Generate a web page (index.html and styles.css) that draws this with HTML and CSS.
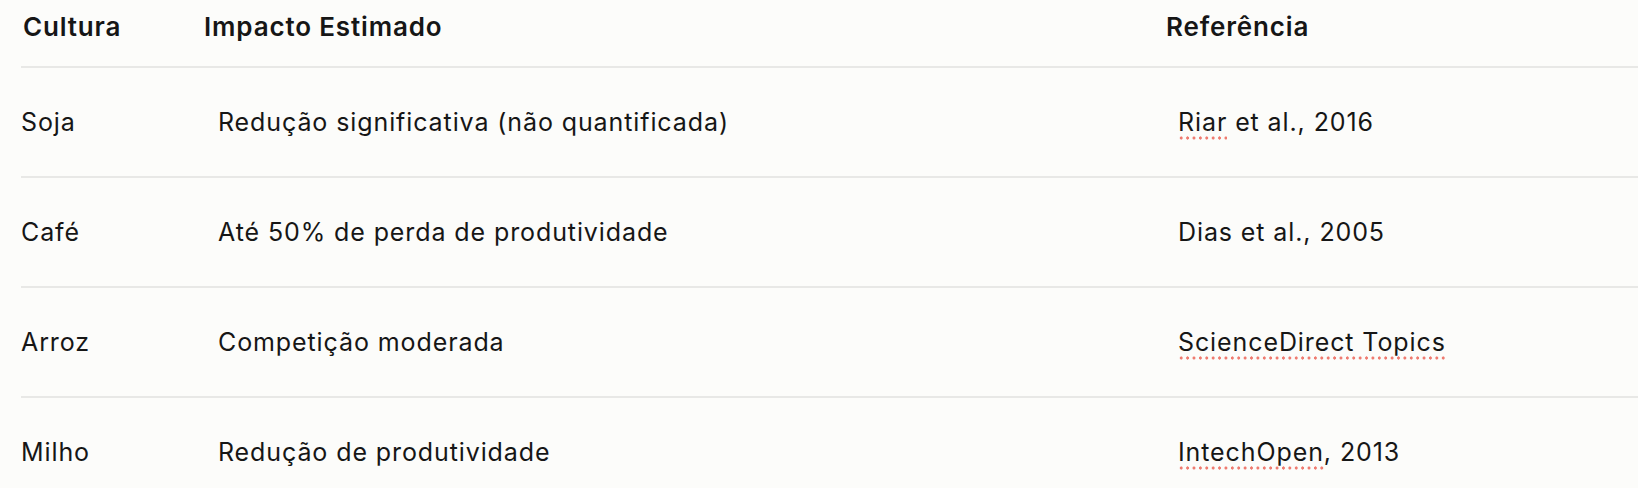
FILE: index.html
```html
<!DOCTYPE html>
<html lang="pt">
<head>
<meta charset="utf-8">
<link rel="stylesheet" href="styles.css">
</head>
<body>
<table class="tbl">
  <colgroup>
    <col class="c1">
    <col class="c2">
    <col class="c3">
  </colgroup>
  <thead>
    <tr>
      <th class="h1">Cultura</th>
      <th class="h2">Impacto Estimado</th>
      <th class="h3">Referência</th>
    </tr>
  </thead>
  <tbody>
    <tr>
      <td class="d1">Soja</td>
      <td class="d2">Redução significativa (não quantificada)</td>
      <td class="d3"><span class="spell">Riar</span> et al., 2016</td>
    </tr>
    <tr>
      <td class="d1">Café</td>
      <td class="d2">Até 50% de perda de produtividade</td>
      <td class="d3">Dias et al., 2005</td>
    </tr>
    <tr>
      <td class="d1">Arroz</td>
      <td class="d2">Competição moderada</td>
      <td class="d3"><span class="spell">ScienceDirect Topics</span></td>
    </tr>
    <tr>
      <td class="d1">Milho</td>
      <td class="d2">Redução de produtividade</td>
      <td class="d3"><span class="spell">IntechOpen</span>, 2013</td>
    </tr>
  </tbody>
</table>
</body>
</html>
```

FILE: styles.css
```css
html, body {
  margin: 0;
  padding: 0;
  background: #fcfcfa;
}
body {
  font-family: Inter, "Noto Sans", sans-serif;
  color: #161616;
  overflow: hidden;
}
.tbl {
  margin-left: 21px;
  width: 1617px;
  border-collapse: collapse;
  table-layout: fixed;
}
.c1 { width: 183px; }
.c2 { width: 962px; }
.c3 { width: 472px; }
th {
  text-align: left;
  font-weight: 600;
  font-size: 26px;
  letter-spacing: 0.85px;
  line-height: 30px;
  padding: 12px 0 24px 0;
  border-bottom: 2px solid #e8e8e6;
}
th.h1 { padding-left: 2px; }
td {
  font-size: 25px;
  letter-spacing: 0.9px;
  line-height: 30px;
  height: 108px;
  padding: 0;
  vertical-align: middle;
  border-bottom: 2px solid #e8e8e6;
}
td.d2 { padding-left: 14px; }
td.d3 { padding-left: 12px; }
.spell {
  background-image: radial-gradient(circle, #ef7b70 1.4px, transparent 1.8px);
  background-size: 6.4px 4px;
  background-repeat: repeat-x;
  background-position: 0 100%;
  padding-bottom: 3px;
}
```
